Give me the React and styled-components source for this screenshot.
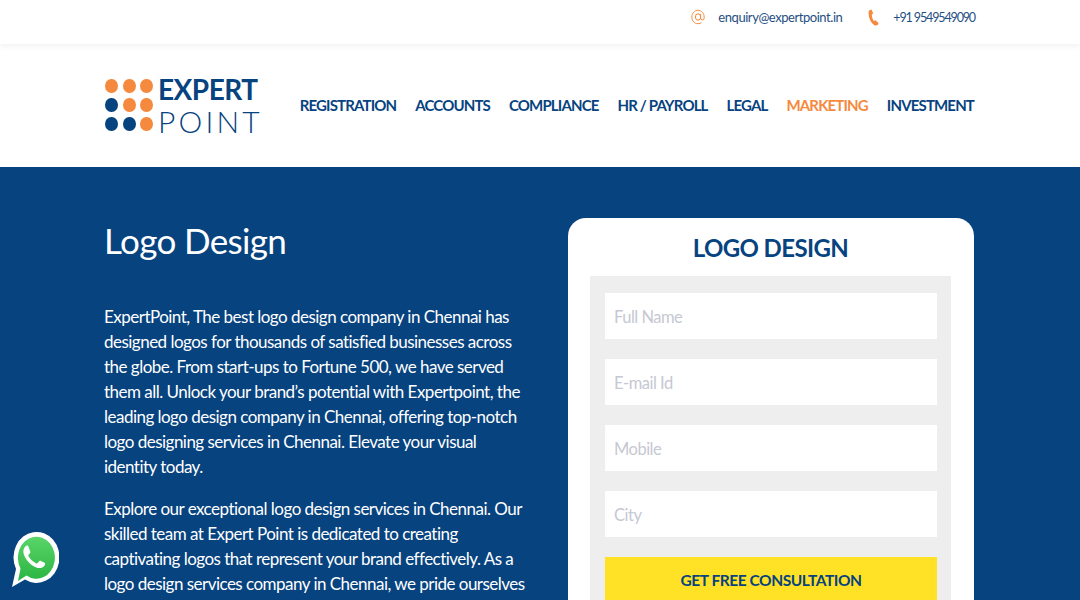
import React from "react";
import styled, { createGlobalStyle } from "styled-components";

const Global = createGlobalStyle`
  html, body { margin: 0; padding: 0; height: 600px; overflow: hidden; background: #07437f; }
  * { box-sizing: border-box; }
  body { font-family: "Lato", "Open Sans", sans-serif; color: #07437f; }
  #root { height: 600px; overflow: hidden; }
`;

const Container = styled.div`
  width: 870px;
  margin-left: 105px;
`;
const TopBar = styled.div`
  height: 44px;
  background: #fff;
  box-shadow: 0 2px 6px rgba(0, 0, 0, 0.06);
  position: relative;
  z-index: 1;
`;
const TopInner = styled(Container)`
  height: 34px;
  display: flex;
  justify-content: flex-end;
  align-items: center;
  gap: 26px;
`;
const Contact = styled.div`
  display: flex;
  align-items: center;
  gap: ${(p) => p.$gap}px;
  font-size: ${(p) => p.$size}px;
  letter-spacing: ${(p) => p.$ls}px;
  white-space: nowrap;
  color: #1f4f83;
`;
const Header = styled.header`
  height: 123px;
  background: #fff;
`;
const HeaderInner = styled(Container)`
  height: 100%;
  display: flex;
  align-items: center;
  justify-content: space-between;
  padding-bottom: 1px;
`;
const Logo = styled.div`
  display: flex;
  align-items: center;
  gap: 5px;
  width: 153px;
`;
const Dots = styled.div`
  display: grid;
  grid-template-columns: repeat(3, 13px);
  grid-auto-rows: 14.5px;
  gap: 4.5px;
`;
const Dot = styled.span`
  border-radius: 50%;
  background: ${(p) => (p.$blue ? "#07437f" : "#f58a3f")};
`;
const Word = styled.div`
  display: flex;
  flex-direction: column;
  gap: 4px;
`;
const Expert = styled.div`
  font-size: 28px;
  line-height: 28px;
  font-weight: 700;
  color: #07437f;
  letter-spacing: -0.5px;
`;
const Point = styled.div`
  font-size: 30px;
  line-height: 28px;
  font-weight: 300;
  color: #07437f;
  letter-spacing: 3.2px;
`;
const Nav = styled.nav`
  display: flex;
  gap: 19px;
  margin-right: 1px;
`;
const NavLink = styled.a`
  font-size: 15px;
  font-weight: 700;
  letter-spacing: -0.85px;
  white-space: nowrap;
  color: ${(p) => (p.$active ? "#f58a3f" : "#07437f")};
`;
const Hero = styled.section`
  height: 433px;
  background: #07437f;
  overflow: hidden;
`;
const HeroInner = styled(Container)`
  display: grid;
  grid-template-columns: 423px 406px;
  column-gap: 40px;
`;
const Left = styled.div`
  padding-top: 48px;
  margin-left: -1px;
  color: #fff;
`;
const Title = styled.h1`
  margin: 0 0 39px;
  font-size: 35px;
  line-height: 50px;
  font-weight: 400;
  letter-spacing: -0.65px;
`;
const Para = styled.p`
  margin: 0 0 17px;
  font-size: 17px;
  line-height: 25px;
  font-weight: 400;
  letter-spacing: -0.52px;
  white-space: nowrap;
`;
const Card = styled.div`
  margin-top: 51px;
  height: 420px;
  background: #fff;
  border-radius: 18px 18px 0 0;
  padding: 14px 23px 0 22px;
`;
const CardTitle = styled.h2`
  margin: 0 0 12px;
  text-align: center;
  font-size: 24px;
  line-height: 32px;
  font-weight: 700;
  letter-spacing: -0.6px;
  color: #07437f;
`;
const FormPanel = styled.div`
  background: #eee;
  padding: 17px 14px 0 15px;
  display: flex;
  flex-direction: column;
  gap: 20px;
  height: 340px;
`;
const Field = styled.input`
  height: 46px;
  border: 0;
  background: #fff;
  padding: 1px 9px 0;
  font-size: 16.5px;
  letter-spacing: -0.5px;
  font-family: inherit;
  &::placeholder { color: #c6c8d2; opacity: 1; }
`;
const Submit = styled.button`
  height: 46px;
  border: 0;
  padding-bottom: 2px;
  background: #ffe225;
  color: #07437f;
  font-size: 15.5px;
  font-weight: 700;
  font-family: inherit;
  letter-spacing: -0.45px;
`;
const WhatsApp = styled.a`
  position: fixed;
  left: 11px;
  bottom: 12px;
  width: 48px;
  height: 58px;
`;

const pattern = [0, 0, 0, 1, 0, 0, 1, 1, 0];

export default function App() {
  return (
    <>
      <Global />
      <TopBar>
        <TopInner>
          <Contact $gap={13} $ls={-0.45} $size={13}>
            <svg width="14" height="16" viewBox="0 0 24 26" fill="none" stroke="#f58a3f" strokeWidth="1.7">
              <ellipse cx="12" cy="13" rx="4.5" ry="5.5" />
              <path d="M16.500 7.500v7.500a3 3 0 0 0 6 0V13C22.500 6.500 18 1.500 12 1.500S1.500 6.500 1.500 13 6 24.500 12 24.500c2.500 0 4.500-.8 6-2" />
            </svg>
            enquiry@expertpoint.in
          </Contact>
          <Contact $gap={14} $ls={-1.13} $size={12.5}>
            <svg width="11" height="17" viewBox="0 0 11 17" fill="#f58a3f">
              <path d="M3.500.5 1 1.500C-.3 5.500 1.500 12.500 6 16c1 .8 2.500.8 4-.2l.6-1.600-3-3-1.800.8C4.500 10 3.800 7.500 3.800 5.400L5.200 4.500 3.500.5z" />
            </svg>
            +91 9549549090
          </Contact>
        </TopInner>
      </TopBar>
      <Header>
        <HeaderInner>
          <Logo>
            <Dots>
              {pattern.map((b, i) => (
                <Dot key={i} $blue={!!b} />
              ))}
            </Dots>
            <Word>
              <Expert>EXPERT</Expert>
              <Point>POINT</Point>
            </Word>
          </Logo>
          <Nav>
            <NavLink>REGISTRATION</NavLink>
            <NavLink>ACCOUNTS</NavLink>
            <NavLink>COMPLIANCE</NavLink>
            <NavLink>HR / PAYROLL</NavLink>
            <NavLink>LEGAL</NavLink>
            <NavLink $active>MARKETING</NavLink>
            <NavLink>INVESTMENT</NavLink>
          </Nav>
        </HeaderInner>
      </Header>
      <Hero>
        <HeroInner>
          <Left>
            <Title>Logo Design</Title>
            <Para>
              ExpertPoint, The best logo design company in Chennai has
              <br />
              designed logos for thousands of satisfied businesses across
              <br />
              the globe. From start-ups to Fortune 500, we have served
              <br />
              them all. Unlock your brand’s potential with Expertpoint, the
              <br />
              leading logo design company in Chennai, offering top-notch
              <br />
              logo designing services in Chennai. Elevate your visual
              <br />
              identity today.
            </Para>
            <Para>
              Explore our exceptional logo design services in Chennai. Our
              <br />
              skilled team at Expert Point is dedicated to creating
              <br />
              captivating logos that represent your brand effectively. As a
              <br />
              logo design services company in Chennai, we pride ourselves
            </Para>
          </Left>
          <Card>
            <CardTitle>LOGO DESIGN</CardTitle>
            <FormPanel>
              <Field placeholder="Full Name" />
              <Field placeholder="E-mail Id" />
              <Field placeholder="Mobile" />
              <Field placeholder="City" />
              <Submit>GET FREE CONSULTATION</Submit>
            </FormPanel>
          </Card>
        </HeroInner>
      </Hero>
      <WhatsApp>
        <svg width="48" height="58" viewBox="0 0 48 58">
          <defs>
            <linearGradient id="wa" x1="0" y1="0" x2="0" y2="1">
              <stop offset="0" stopColor="#5ad569" />
              <stop offset="1" stopColor="#2ab542" />
            </linearGradient>
          </defs>
          <path fill="#fff" d="M1 57 5 39A23 25.500 0 1 1 14 49.500Z" />
          <path fill="url(#wa)" d="M7 51 9.500 38.500A18.500 21 0 1 1 15.500 45.500Z" />
          <path
            fill="#fff"
            d="M17 15.500c-1-.2-2 .1-2.700.9-1.700 1.800-2.400 4.200-1.700 7 1.500 5.800 7 11.800 12.700 14 2.800 1 5.500.6 7.500-1 1.100-.9 1.500-2.100 1.300-3.300l-5.200-2.600c-.7.800-1.500 1.900-2.300 2.600-.5.400-1.100.4-1.700.1-3-1.400-5.800-4-7.400-7.100-.3-.5-.2-1.100.2-1.600.7-.8 1.300-1.500 1.800-2.300L17 15.500z"
          />
        </svg>
      </WhatsApp>
    </>
  );
}
